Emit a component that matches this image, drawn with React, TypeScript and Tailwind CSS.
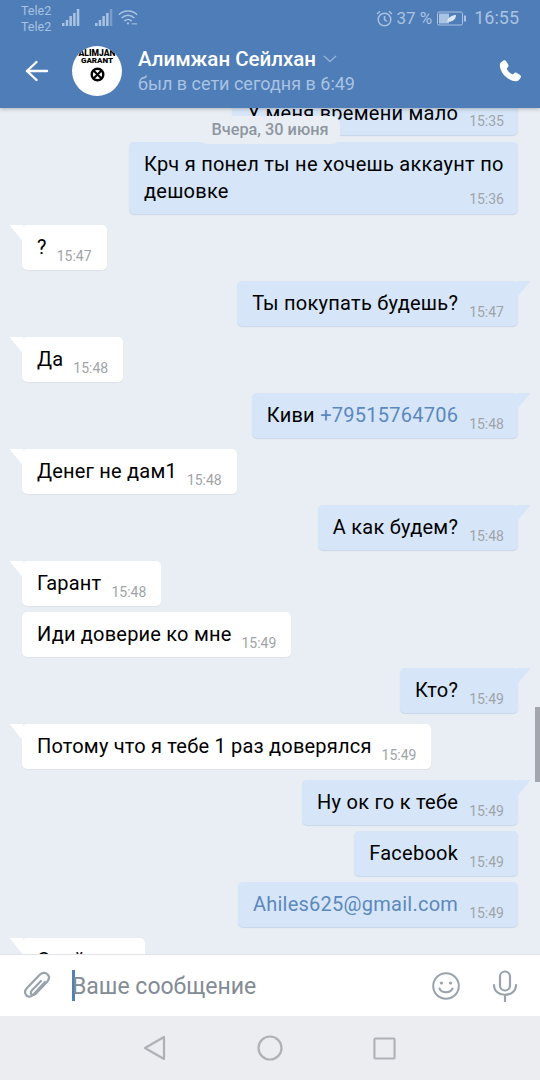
import React from "react";

type Part = string | { link: string };
type Msg = { out?: boolean; lines: Part[]; time: string; tail?: boolean; gap: number; multiline?: boolean };

const msgs: Msg[] = [
  { out: true, lines: ["Крч я понел ты не хочешь аккаунт по дешовке"], time: "15:36", gap: 7, multiline: true },
  { lines: ["?"], time: "15:47", tail: true, gap: 11 },
  { out: true, lines: ["Ты покупать будешь?"], time: "15:47", tail: true, gap: 11 },
  { lines: ["Да"], time: "15:48", tail: true, gap: 11 },
  { out: true, lines: ["Киви ", { link: "+79515764706" }], time: "15:48", tail: true, gap: 11 },
  { lines: ["Денег не дам1"], time: "15:48", tail: true, gap: 11 },
  { out: true, lines: ["А как будем?"], time: "15:48", tail: true, gap: 11 },
  { lines: ["Гарант"], time: "15:48", tail: true, gap: 11 },
  { lines: ["Иди доверие ко мне"], time: "15:49", gap: 6 },
  { out: true, lines: ["Кто?"], time: "15:49", tail: true, gap: 11 },
  { lines: ["Потому что я тебе 1 раз доверялся"], time: "15:49", tail: true, gap: 11 },
  { out: true, lines: ["Ну ок го к тебе"], time: "15:49", tail: true, gap: 11 },
  { out: true, lines: ["Facebook"], time: "15:49", gap: 6 },
  { out: true, lines: [{ link: "Ahiles625@gmail.com" }], time: "15:49", gap: 6 },
  { lines: ["Свой"], time: "15:49", tail: true, gap: 11 },
];

function Tail({ out }: { out?: boolean }) {
  return out ? (
    <svg className="absolute top-0 right-[-13px]" width="14" height="17" viewBox="0 0 14 17">
      <path d="M0 0 H13.5 L0.5 16 H0 Z" fill="#d6e6f8" />
    </svg>
  ) : (
    <svg className="absolute top-0 left-[-13px]" width="14" height="17" viewBox="0 0 14 17">
      <path d="M0.5 0 H14 V16 H13.5 Z" fill="#ffffff" />
    </svg>
  );
}

function Bubble({ m }: { m: Msg }) {
  const base = m.out
    ? "self-end bg-[#d6e6f8] shadow-[0_1px_1px_#c6d6e8] pr-[14px]"
    : "self-start bg-white shadow-[0_1px_1px_#dde2e8] pr-[15px]";
  return (
    <div
      style={{ marginTop: m.gap }}
      className={`relative rounded-[5px] pl-[15px] shrink-0 ${base} ${m.multiline ? "w-[389px] h-[72px] pt-[9px]" : "h-[45px] flex items-start pt-[9px]"}`}
    >
      {m.tail && <Tail out={m.out} />}
      <span className={`text-[20px] leading-[27px] text-black ${m.out ? "tracking-[0.25px]" : "tracking-[0.2px]"}`}>
        {m.lines.map((p, i) =>
          typeof p === "string" ? (
            <span key={i} className="whitespace-pre-wrap">{p}</span>
          ) : (
            <span key={i} className="text-[#5b88bd]">{p.link}</span>
          )
        )}
      </span>
      <span
        className={`text-[14px] leading-[16px] text-[#a0a4a8] ${m.multiline ? "absolute right-[14px] bottom-[7px]" : m.out ? "ml-[11px] mt-[14px]" : "ml-[10px] mt-[14px]"}`}
      >
        {m.time}
      </span>
    </div>
  );
}

function Bars({ dim }: { dim?: boolean }) {
  const heights = [3, 6, 10, 13, 17];
  return (
    <svg width="18" height="17" viewBox="0 0 18 17">
      {heights.map((h, i) => (
        <rect key={i} x={i * 3.7} y={17 - h} width="2.5" height={h} fill={dim && i === 4 ? "#7a9dca" : "#a9c3e2"} />
      ))}
    </svg>
  );
}

export default function App() {
  return (
    <div className="w-[540px] h-[1080px] flex flex-col overflow-hidden bg-[#e9eef4] relative font-['Roboto',sans-serif]">
      <header className="relative z-10 h-[108px] shrink-0 bg-[#4f7db8] shadow-[0_1px_4px_rgba(0,0,0,0.25)] flex flex-col">
        <div className="h-[36px] flex items-start text-[#a9c3e2]">
          <div className="ml-[21px] mt-[3px] w-[34px] text-[12.5px] leading-[16px]">
            <div>Tele2</div>
            <div>Tele2</div>
          </div>
          <div className="ml-[7px] mt-[9px] flex items-start gap-[15px]">
            <Bars />
            <Bars dim />
          </div>
          <svg className="ml-[5px] mt-[9px]" width="20" height="17" viewBox="0 0 22 18" fill="none" stroke="#a9c3e2" strokeWidth="1.6">
            <path d="M1 6 C6 0.5 16 0.5 21 6" />
            <path d="M4 9.5 C8 5.5 14 5.5 18 9.5" />
            <path d="M7 13 C9.5 10.5 12.5 10.5 15 13" />
            <circle cx="11" cy="15.5" r="1.2" fill="#a9c3e2" stroke="none" />
            <path d="M15 16 H21" strokeWidth="1.2" />
          </svg>
          <div className="ml-auto mr-[21px] mt-[8px] flex items-center text-[17px] leading-[20px]">
            <svg width="17" height="17" viewBox="0 0 17 17" fill="none" stroke="#a9c3e2" strokeWidth="1.5">
              <circle cx="8.5" cy="9.5" r="6.3" />
              <path d="M8.5 6 V9.7 L11 11.5" />
              <path d="M1 4 L4 1.2 M16 4 L13 1.2" />
            </svg>
            <span className="ml-[3px]">37 %</span>
            <svg className="ml-[5px]" width="29" height="15" viewBox="0 0 29 15">
              <rect x="0.5" y="1" width="25" height="13" rx="1.5" fill="none" stroke="#a9c3e2" />
              <rect x="2" y="2.5" width="10" height="10" fill="#a9c3e2" />
              <path d="M10 11 C11 6 15 4 19 4 C19 8 16 11 10 11 Z" fill="#dbe7f4" />
              <rect x="27" y="4.5" width="2" height="6" fill="#a9c3e2" />
            </svg>
            <span className="ml-[8px] text-[18px]">16:55</span>
          </div>
        </div>
        <div className="flex items-center h-[70px]">
          <svg className="ml-[25px]" width="24" height="22" viewBox="0 0 24 22" fill="none" stroke="#ffffff" strokeWidth="2.4" strokeLinecap="round" strokeLinejoin="round">
            <path d="M2 11 H22" />
            <path d="M11.5 2 L2 11 L11.5 20" />
          </svg>
          <div className="ml-[23px] w-[50px] h-[50px] rounded-full bg-white overflow-hidden flex flex-col items-center pt-[3px] shrink-0">
            <div className="text-[8.5px] leading-[8px] font-black text-black whitespace-nowrap">ALIMJAN</div>
            <div className="text-[8px] leading-[8px] font-black text-black whitespace-nowrap">GARANT</div>
            <svg className="mt-[2px]" width="15" height="15" viewBox="0 0 15 15" fill="none" stroke="#000000">
              <circle cx="7.5" cy="7.5" r="5.8" strokeWidth="2.4" />
              <path d="M4 4 L11 11 M11 4 L4 11" strokeWidth="2" />
            </svg>
          </div>
          <div className="ml-[16px] flex flex-col">
            <div className="flex items-center">
              <span className="text-[20.5px] leading-[26px] font-medium text-white whitespace-nowrap">Алимжан Сейлхан</span>
              <svg className="ml-[7px]" width="14" height="8" viewBox="0 0 14 8" fill="none" stroke="#8fb0d8" strokeWidth="1.6">
                <path d="M1 1 L7 6.5 L13 1" />
              </svg>
            </div>
            <span className="text-[18px] leading-[24px] text-[#a9c3e2] whitespace-nowrap">был в сети сегодня в 6:49</span>
          </div>
          <svg className="ml-auto mr-[18px]" width="24" height="24" viewBox="0 0 24 24" fill="#ffffff">
            <path d="M5.5 1.5 C6.6 1 7.6 1.3 8.2 2.3 L10.3 5.8 C10.8 6.7 10.6 7.6 9.9 8.3 L8.7 9.4 C9.6 11.9 12 14.4 14.8 15.5 L16 14.2 C16.7 13.5 17.6 13.3 18.5 13.8 L22 15.9 C23 16.5 23.3 17.6 22.7 18.6 C21.6 20.8 19.8 22.4 17.8 22.3 C9.8 21.6 2.4 14 1.8 6.4 C1.7 4.5 3.3 2.6 5.5 1.5 Z" />
          </svg>
        </div>
      </header>

      <main className="relative flex-1 min-h-0 overflow-hidden flex flex-col px-[22px]">
        <div className="relative self-end shrink-0 h-[45px] mt-[-18px] rounded-[5px] bg-[#d6e6f8] shadow-[0_1px_1px_#c6d6e8] pl-[15px] pr-[14px] pt-[10px] flex items-start">
          <span className="text-[20px] leading-[27px] text-black tracking-[0.25px]">У меня времени мало</span>
          <span className="ml-[11px] mt-[13px] text-[14px] leading-[16px] text-[#a0a4a8]">15:35</span>
        </div>
        {msgs.map((m, i) => (
          <Bubble key={i} m={m} />
        ))}

        <div className="absolute left-[200px] top-[8px] w-[140px] h-[28px] rounded-[8px] bg-[#e9eef4] flex items-center justify-center text-[16.3px] font-medium text-[#8e96a0] whitespace-nowrap">
          Вчера, 30 июня
        </div>
        <div className="absolute right-0 top-[599px] w-[5px] h-[75px] bg-[#a3a7ab]" />
      </main>

      <div className="h-[62px] shrink-0 bg-white border-t border-[#e1e3e6] flex items-center relative z-10">
        <svg className="ml-[22px]" width="30" height="32" viewBox="0 0 30 32" fill="none" stroke="#99a2ad" strokeWidth="2.2" strokeLinecap="round">
          <path d="M23 12 L11 25 C8.5 27.5 5 27 3.8 24.5 C2.6 22.3 3 20 5 18 L17.5 5 C20 2.4 23.5 2.2 25.5 4.2 C27.6 6.4 27.3 9.4 25 12 L13.5 24 C12 25.5 10.2 25.3 9.3 24.2 C8.4 23 8.6 21.7 10 20.2 L19 11" />
        </svg>
        <div className="ml-[20px] w-[3px] h-[31px] bg-[#5181b8] shrink-0" />
        <span className="ml-[-3px] mt-[3px] text-[23px] leading-[30px] text-[#838b94]">Ваше сообщение</span>
        <svg className="ml-auto" width="28" height="28" viewBox="0 0 28 28" fill="none" stroke="#99a2ad" strokeWidth="2">
          <circle cx="14" cy="14" r="12.8" />
          <circle cx="9.5" cy="11" r="1.6" fill="#99a2ad" stroke="none" />
          <circle cx="18.5" cy="11" r="1.6" fill="#99a2ad" stroke="none" />
          <path d="M7.5 16.5 C10 21.5 18 21.5 20.5 16.5" strokeLinecap="round" />
        </svg>
        <svg className="ml-[32px] mr-[22px]" width="26" height="32" viewBox="0 0 26 32" fill="none" stroke="#99a2ad" strokeWidth="2.2" strokeLinecap="round">
          <rect x="8" y="1.5" width="10" height="19" rx="5" />
          <path d="M2 15 C2 28 24 28 24 15" />
          <path d="M13 25 V31" />
        </svg>
      </div>

      <nav className="h-[64px] shrink-0 bg-[#ebedf0] flex items-center relative z-10">
        <svg className="ml-[143px]" width="23" height="26" viewBox="0 0 23 26" fill="none" stroke="#aeb1b5" strokeWidth="2.2" strokeLinejoin="round">
          <path d="M21 2 V24 L2 13 Z" />
        </svg>
        <svg className="ml-[91px]" width="26" height="26" viewBox="0 0 26 26" fill="none" stroke="#aeb1b5" strokeWidth="2.2">
          <circle cx="13" cy="13" r="11.5" />
        </svg>
        <svg className="ml-[90px]" width="23" height="23" viewBox="0 0 24 24" fill="none" stroke="#aeb1b5" strokeWidth="2.2">
          <rect x="1.5" y="1.5" width="21" height="21" rx="1" />
        </svg>
      </nav>
    </div>
  );
}
